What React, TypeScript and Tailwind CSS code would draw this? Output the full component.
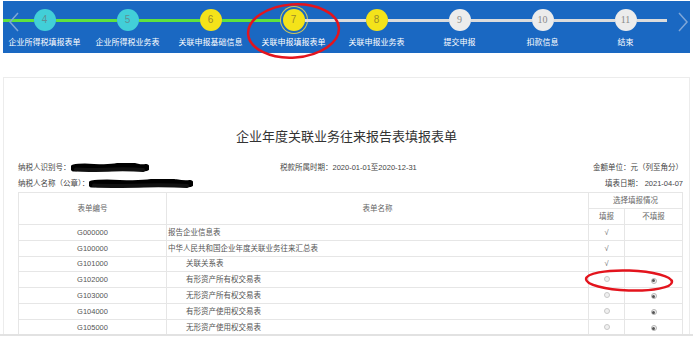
import React from 'react';

type Step = { n: number; label: string; tone: 'done' | 'active' | 'todo'; ring?: boolean };

const steps: Step[] = [
  { n: 4, label: '企业所得税填报表单', tone: 'done' },
  { n: 5, label: '企业所得税业务表', tone: 'done' },
  { n: 6, label: '关联申报基础信息', tone: 'active' },
  { n: 7, label: '关联申报填报表单', tone: 'active', ring: true },
  { n: 8, label: '关联申报业务表', tone: 'active' },
  { n: 9, label: '提交申报', tone: 'todo' },
  { n: 10, label: '扣款信息', tone: 'todo' },
  { n: 11, label: '结束', tone: 'todo' },
];

type Row = { code: string; name: string; indent?: boolean; mode: 'check' | 'radio' };

const rows: Row[] = [
  { code: 'G000000', name: '报告企业信息表', mode: 'check' },
  { code: 'G100000', name: '中华人民共和国企业年度关联业务往来汇总表', mode: 'check' },
  { code: 'G101000', name: '关联关系表', indent: true, mode: 'check' },
  { code: 'G102000', name: '有形资产所有权交易表', indent: true, mode: 'radio' },
  { code: 'G103000', name: '无形资产所有权交易表', indent: true, mode: 'radio' },
  { code: 'G104000', name: '有形资产使用权交易表', indent: true, mode: 'radio' },
  { code: 'G105000', name: '无形资产使用权交易表', indent: true, mode: 'radio' },
];

const circleTone = {
  done: 'bg-[#42cfd8] text-[#5f8f94]',
  active: 'bg-[#f4e31a] text-[#9a8b2a]',
  todo: 'bg-[#ececec] text-[#8a8a8a]',
};

const StepItem: React.FC<{ step: Step }> = ({ step }) => {
  const leftGreen = step.n <= 7;
  const rightGreen = step.n < 7;
  return (
    <div className="w-[83px] flex flex-col items-center shrink-0">
      <div className="w-full flex items-center h-[22px]">
        <div className={`flex-1 h-[3px] ${leftGreen ? 'bg-[#5fe23e]' : 'bg-[#dcdcdc]'}`} />
        <div
          className={`w-[22px] h-[22px] rounded-full flex items-center justify-center text-[10px] leading-none ${circleTone[step.tone]} ${
            step.ring ? 'shadow-[0_0_0_2px_#1a68c2,0_0_0_3px_#cfc85a]' : ''
          } ${step.n >= 9 ? 'font-["Liberation_Serif"]' : ''}`}
        >
          {step.n}
        </div>
        <div className={`flex-1 h-[3px] ${rightGreen ? 'bg-[#5fe23e]' : 'bg-[#dcdcdc]'}`} />
      </div>
      <div className="mt-[7px] text-[8px] leading-[10px] text-white whitespace-nowrap">{step.label}</div>
    </div>
  );
};

// hand-drawn redaction blob over the taxpayer details
const Scribble: React.FC<{ w: number }> = ({ w }) => (
  <svg width={w} height="10" viewBox={`0 0 ${w} 10`} className="inline-block align-middle">
    <path
      d={`M3 5 C ${w * 0.2} 2, ${w * 0.4} 7, ${w * 0.6} 3.5 S ${w * 0.85} 6.5, ${w - 3} 4.5`}
      stroke="#000"
      strokeWidth="7"
      fill="none"
      strokeLinecap="round"
    />
    <path d={`M5 6.5 C ${w * 0.3} 8, ${w * 0.6} 5, ${w - 6} 7`} stroke="#111" strokeWidth="4" fill="none" strokeLinecap="round" />
  </svg>
);

const Radio: React.FC<{ checked?: boolean }> = ({ checked }) => (
  <span
    className={`inline-flex w-[6px] h-[6px] rounded-full border items-center justify-center ${
      checked ? 'border-[#b5b5b5] bg-[#f2f2f2]' : 'border-[#c8c8c8] bg-[#f0f0f0]'
    }`}
  >
    {checked && <span className="w-[3px] h-[3px] rounded-full bg-[#555]" />}
  </span>
);

export default function App() {
  return (
    <div className='relative w-[693px] h-[338px] overflow-hidden bg-white font-["Liberation_Sans","Noto_Sans_CJK_SC",sans-serif]'>
      {/* step bar */}
      <div className="relative mx-[3px] mt-[1px] h-[52px] bg-[#1a68c2] pt-[8px] flex">
        {steps.map((s) => (
          <StepItem key={s.n} step={s} />
        ))}
        <svg className="absolute left-[5px] top-[11px]" width="12" height="20" viewBox="0 0 12 20">
          <path d="M10 1 L2 10 L10 19" stroke="#7ea6d8" strokeWidth="1.5" fill="none" />
        </svg>
        <svg className="absolute right-[1px] top-[11px]" width="12" height="20" viewBox="0 0 12 20">
          <path d="M2 1 L10 10 L2 19" stroke="#7ea6d8" strokeWidth="1.5" fill="none" />
        </svg>
      </div>

      {/* form panel */}
      <div className="mx-[3px] mt-[24px] h-[257px] border border-b-0 border-[#ececec] overflow-hidden">
        <h1 className="pt-[51px] text-center text-[13px] leading-[16px] text-[#333]">企业年度关联业务往来报告表填报表单</h1>

        <div className="pl-[14px] pr-[6px] mt-[18px] text-[7.5px] leading-[10px] text-[#444]">
          <div className="flex items-center">
            <div className="w-[262px] flex items-center">
              <span>纳税人识别号：</span>
              <Scribble w={78} />
            </div>
            <div>税款所属时期：2020-01-01至2020-12-31</div>
            <div className="ml-auto">金额单位：元（列至角分）</div>
          </div>
          <div className="flex items-center mt-[6px]">
            <span>纳税人名称（公章）：</span>
            <Scribble w={104} />
            <div className="ml-auto">填表日期： 2021-04-07</div>
          </div>
        </div>

        <table className="ml-[14px] mt-[3px] w-[664px] table-fixed border-collapse text-[7.5px] text-[#555]">
          <colgroup>
            <col className="w-[148px]" />
            <col className="w-[422px]" />
            <col className="w-[36px]" />
            <col className="w-[58px]" />
          </colgroup>
          <thead className="text-[#666]">
            <tr className="h-[16px]">
              <th rowSpan={2} className="border border-[#e6e6e6] font-normal">表单编号</th>
              <th rowSpan={2} className="border border-[#e6e6e6] font-normal">表单名称</th>
              <th colSpan={2} className="border border-[#e6e6e6] font-normal">选择填报情况</th>
            </tr>
            <tr className="h-[16px]">
              <th className="border border-[#e6e6e6] font-normal">填报</th>
              <th className="border border-[#e6e6e6] font-normal">不填报</th>
            </tr>
          </thead>
          <tbody>
            {rows.map((r) => (
              <tr key={r.code} className="h-[15.8px]">
                <td className="border border-[#e6e6e6] text-center p-0">{r.code}</td>
                <td className={`border border-[#e6e6e6] p-0 ${r.indent ? 'pl-[19px]' : 'pl-[1px]'}`}>{r.name}</td>
                <td className="border border-[#e6e6e6] text-center p-0 text-[#777]">
                  {r.mode === 'check' ? '√' : <Radio />}
                </td>
                <td className="border border-[#e6e6e6] text-center p-0">{r.mode === 'radio' && <Radio checked />}</td>
              </tr>
            ))}
          </tbody>
        </table>
      </div>
      <div className="h-[2px] bg-[#e2e2e2]" />

      {/* red annotation marks */}
      <svg className="absolute inset-0 pointer-events-none" width="693" height="338" viewBox="0 0 693 338">
        <ellipse cx="293.5" cy="31" rx="45.5" ry="26.5" stroke="#e3141d" strokeWidth="2.5" fill="none" transform="rotate(-4 293.5 31)" />
        <ellipse cx="629" cy="280.5" rx="43" ry="10" stroke="#e3141d" strokeWidth="2.5" fill="none" transform="rotate(2 629 280.5)" />
      </svg>
    </div>
  );
}
